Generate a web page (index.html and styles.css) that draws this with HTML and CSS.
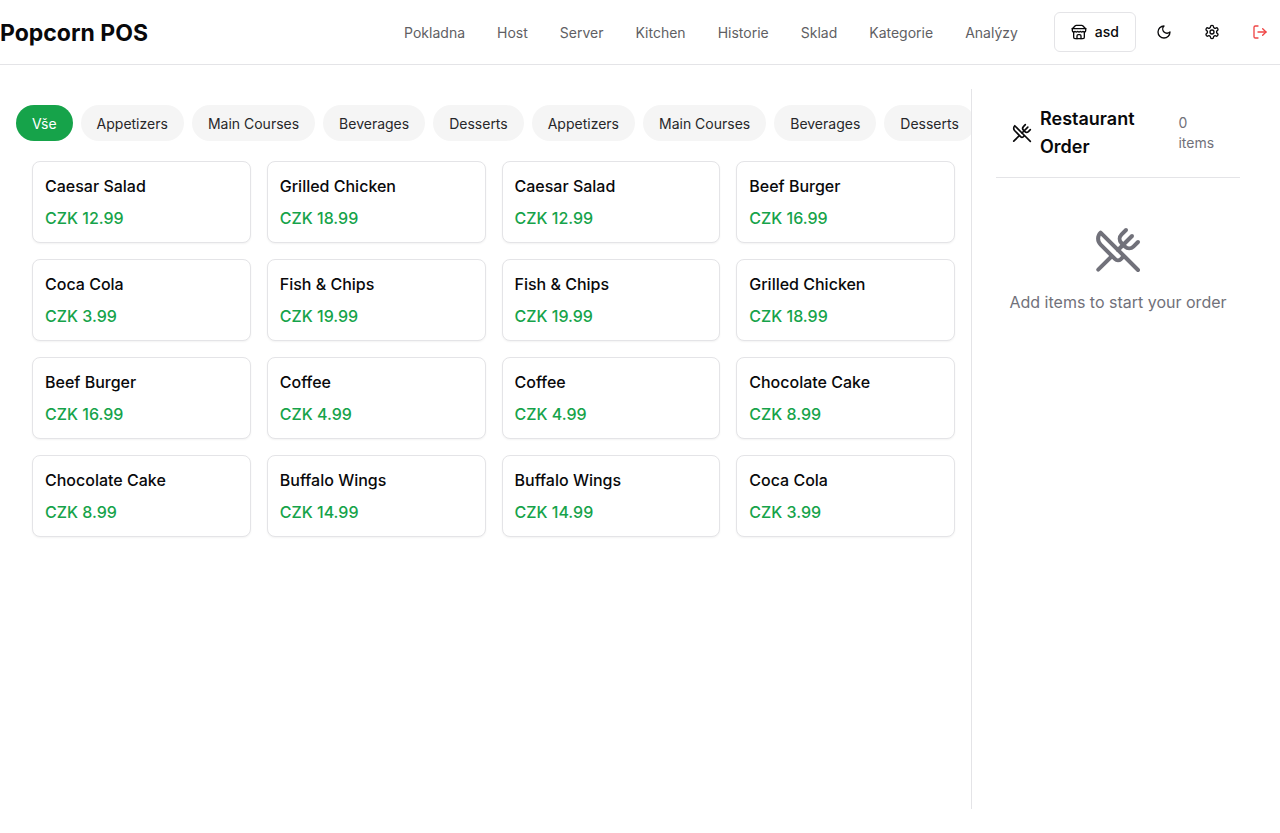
FILE: index.html
```html
<!DOCTYPE html>
<html lang="cs">
<head>
<meta charset="utf-8">
<meta name="viewport" content="width=device-width, initial-scale=1">
<title>Popcorn POS</title>
<link rel="stylesheet" href="styles.css">
</head>
<body>
<svg class="sprite" aria-hidden="true">
  <symbol id="utensils" viewBox="0 0 24 24">
    <path d="m16 2-2.3 2.3a3 3 0 0 0 0 4.2l1.8 1.8a3 3 0 0 0 4.2 0L22 8"/>
    <path d="M15 15 3.3 3.3a4.2 4.2 0 0 0 0 6l7.3 7.3c.7.7 2 .7 2.8 0L15 15Zm0 0 7 7"/>
    <path d="m2.1 21.8 6.4-6.3"/>
    <path d="m19 5-7 7"/>
  </symbol>
</svg>
<header class="topbar">
  <h1 class="brand">Popcorn POS</h1>
  <div class="topbar-end">
    <nav class="nav">
      <a href="#">Pokladna</a>
      <a href="#">Host</a>
      <a href="#">Server</a>
      <a href="#">Kitchen</a>
      <a href="#">Historie</a>
      <a href="#">Sklad</a>
      <a href="#">Kategorie</a>
      <a href="#">Analýzy</a>
    </nav>
    <div class="actions">
      <button class="store-button" type="button">
        <svg class="icon" viewBox="0 0 24 24" aria-hidden="true"><path d="m2 7 4.41-4.41A2 2 0 0 1 7.83 2h8.34a2 2 0 0 1 1.42.59L22 7"/><path d="M4 12v8a2 2 0 0 0 2 2h12a2 2 0 0 0 2-2v-8"/><path d="M15 22v-4a2 2 0 0 0-2-2h-2a2 2 0 0 0-2 2v4"/><path d="M2 7h20"/><path d="M22 7v3a2 2 0 0 1-2 2a2.7 2.7 0 0 1-1.59-.63.7.7 0 0 0-.82 0A2.7 2.7 0 0 1 16 12a2.7 2.7 0 0 1-1.59-.63.7.7 0 0 0-.82 0A2.7 2.7 0 0 1 12 12a2.7 2.7 0 0 1-1.59-.63.7.7 0 0 0-.82 0A2.7 2.7 0 0 1 8 12a2.7 2.7 0 0 1-1.59-.63.7.7 0 0 0-.82 0A2.7 2.7 0 0 1 4 12a2 2 0 0 1-2-2V7"/></svg>
        asd
      </button>
      <button class="icon-button" type="button" aria-label="Tmavý režim">
        <svg class="icon" viewBox="0 0 24 24" aria-hidden="true"><path d="M12 3a6 6 0 0 0 9 9 9 9 0 1 1-9-9Z"/></svg>
      </button>
      <button class="icon-button" type="button" aria-label="Nastavení">
        <svg class="icon" viewBox="0 0 24 24" aria-hidden="true"><path d="M12.22 2h-.44a2 2 0 0 0-2 2v.18a2 2 0 0 1-1 1.73l-.43.25a2 2 0 0 1-2 0l-.15-.08a2 2 0 0 0-2.73.73l-.22.38a2 2 0 0 0 .73 2.73l.15.1a2 2 0 0 1 1 1.72v.51a2 2 0 0 1-1 1.74l-.15.09a2 2 0 0 0-.73 2.73l.22.38a2 2 0 0 0 2.73.73l.15-.08a2 2 0 0 1 2 0l.43.25a2 2 0 0 1 1 1.73V20a2 2 0 0 0 2 2h.44a2 2 0 0 0 2-2v-.18a2 2 0 0 1 1-1.73l.43-.25a2 2 0 0 1 2 0l.15.08a2 2 0 0 0 2.73-.73l.22-.39a2 2 0 0 0-.73-2.73l-.15-.08a2 2 0 0 1-1-1.74v-.5a2 2 0 0 1 1-1.74l.15-.09a2 2 0 0 0 .73-2.73l-.22-.38a2 2 0 0 0-2.73-.73l-.15.08a2 2 0 0 1-2 0l-.43-.25a2 2 0 0 1-1-1.73V4a2 2 0 0 0-2-2z"/><circle cx="12" cy="12" r="3"/></svg>
      </button>
      <button class="icon-button danger" type="button" aria-label="Odhlásit se">
        <svg class="icon" viewBox="0 0 24 24" aria-hidden="true"><path d="M9 21H5a2 2 0 0 1-2-2V5a2 2 0 0 1 2-2h4"/><path d="m16 17 5-5-5-5"/><path d="M21 12H9"/></svg>
      </button>
    </div>
  </div>
</header>
<main class="workspace">
  <section class="catalog">
    <div class="categories">
      <button class="pill active" type="button">Vše</button>
      <button class="pill" type="button">Appetizers</button>
      <button class="pill" type="button">Main Courses</button>
      <button class="pill" type="button">Beverages</button>
      <button class="pill" type="button">Desserts</button>
      <button class="pill" type="button">Appetizers</button>
      <button class="pill" type="button">Main Courses</button>
      <button class="pill" type="button">Beverages</button>
      <button class="pill" type="button">Desserts</button>
    </div>
    <div class="products">
      <button class="product" type="button"><span>Caesar Salad</span><span class="price">CZK 12.99</span></button>
      <button class="product" type="button"><span>Grilled Chicken</span><span class="price">CZK 18.99</span></button>
      <button class="product" type="button"><span>Caesar Salad</span><span class="price">CZK 12.99</span></button>
      <button class="product" type="button"><span>Beef Burger</span><span class="price">CZK 16.99</span></button>
      <button class="product" type="button"><span>Coca Cola</span><span class="price">CZK 3.99</span></button>
      <button class="product" type="button"><span>Fish &amp; Chips</span><span class="price">CZK 19.99</span></button>
      <button class="product" type="button"><span>Fish &amp; Chips</span><span class="price">CZK 19.99</span></button>
      <button class="product" type="button"><span>Grilled Chicken</span><span class="price">CZK 18.99</span></button>
      <button class="product" type="button"><span>Beef Burger</span><span class="price">CZK 16.99</span></button>
      <button class="product" type="button"><span>Coffee</span><span class="price">CZK 4.99</span></button>
      <button class="product" type="button"><span>Coffee</span><span class="price">CZK 4.99</span></button>
      <button class="product" type="button"><span>Chocolate Cake</span><span class="price">CZK 8.99</span></button>
      <button class="product" type="button"><span>Chocolate Cake</span><span class="price">CZK 8.99</span></button>
      <button class="product" type="button"><span>Buffalo Wings</span><span class="price">CZK 14.99</span></button>
      <button class="product" type="button"><span>Buffalo Wings</span><span class="price">CZK 14.99</span></button>
      <button class="product" type="button"><span>Coca Cola</span><span class="price">CZK 3.99</span></button>
    </div>
  </section>
  <aside class="order">
    <div class="order-head">
      <div class="order-title">
        <svg class="icon icon-md" aria-hidden="true"><use href="#utensils"/></svg>
        <h2>Restaurant Order</h2>
      </div>
      <span class="order-count">0 items</span>
    </div>
    <div class="order-empty">
      <svg class="icon icon-lg" aria-hidden="true"><use href="#utensils"/></svg>
      <p>Add items to start your order</p>
    </div>
  </aside>
</main>
</body>
</html>
```
FILE: styles.css
```css
:root {
  --ink: #09090b;
  --muted: #71717a;
  --line: #e4e4e7;
  --green: #16a34a;
}

* {
  box-sizing: border-box;
}

body {
  margin: 0;
  min-height: 100vh;
  display: flex;
  flex-direction: column;
  background: #fff;
  color: var(--ink);
  font-family: Inter, "Liberation Sans", sans-serif;
  font-size: 16px;
  line-height: 24px;
}

h1,
h2,
p {
  margin: 0;
}

button {
  font: inherit;
  color: inherit;
  cursor: pointer;
}

.sprite {
  display: none;
}

.icon {
  width: 16px;
  height: 16px;
  flex: none;
  fill: none;
  stroke: currentColor;
  stroke-width: 2;
  stroke-linecap: round;
  stroke-linejoin: round;
}

.icon-md {
  width: 20px;
  height: 20px;
}

.icon-lg {
  width: 48px;
  height: 48px;
}

.topbar {
  min-height: 65px;
  display: flex;
  align-items: center;
  justify-content: space-between;
  border-bottom: 1px solid var(--line);
}

.brand {
  padding-top: 2px;
  font-size: 23px;
  line-height: 32px;
  font-weight: 700;
}

.topbar-end {
  display: flex;
  align-items: center;
  gap: 36px;
}

.nav {
  display: flex;
  gap: 32px;
  padding-top: 2px;
}

.nav a {
  color: #5f5f64;
  font-size: 14px;
  line-height: 20px;
  text-decoration: none;
}

.actions {
  display: flex;
  gap: 8px;
}

.store-button,
.icon-button {
  height: 40px;
  display: flex;
  align-items: center;
  justify-content: center;
  border-radius: 6px;
  background: transparent;
}

.store-button {
  gap: 8px;
  padding: 0 16px;
  border: 1px solid var(--line);
  font-size: 14px;
  font-weight: 500;
}

.icon-button {
  width: 40px;
  padding: 0;
  border: 0;
}

.danger {
  color: #ef4444;
}

.workspace {
  flex: 1;
  display: flex;
  padding: 24px 16px;
}

.catalog {
  flex: 1;
  min-width: 0;
  padding-top: 16px;
}

.categories {
  display: flex;
  gap: 8px;
  overflow: hidden;
}

.pill {
  flex: none;
  height: 36px;
  padding: 2px 16px 0;
  border: 0;
  border-radius: 18px;
  background: #f5f5f5;
  color: #27272a;
  font-size: 14px;
}

.pill.active {
  background: var(--green);
  color: #fff;
}

.products {
  display: grid;
  grid-template-columns: repeat(4, minmax(0, 1fr));
  gap: 16px;
  padding: 20px 16px 16px;
}

.product {
  display: flex;
  flex-direction: column;
  gap: 8px;
  padding: 12px;
  border: 1px solid var(--line);
  border-radius: 8px;
  background: #fff;
  box-shadow: 0 1px 2px rgba(0, 0, 0, 0.05);
  font-weight: 500;
  text-align: left;
}

.price {
  color: var(--green);
}

.order {
  width: 293px;
  flex: none;
  padding: 0 24px;
  border-left: 1px solid var(--line);
}

.order-head {
  display: flex;
  align-items: center;
  justify-content: space-between;
  padding: 16px;
  border-bottom: 1px solid var(--line);
}

.order-title {
  display: flex;
  align-items: center;
  gap: 8px;
}

.order-title h2 {
  font-size: 18px;
  line-height: 28px;
  font-weight: 600;
}

.order-count {
  color: var(--muted);
  font-size: 14px;
  line-height: 20px;
}

.order-empty {
  display: flex;
  flex-direction: column;
  align-items: center;
  gap: 16px;
  padding: 48px 0;
  color: var(--muted);
  text-align: center;
}
```
